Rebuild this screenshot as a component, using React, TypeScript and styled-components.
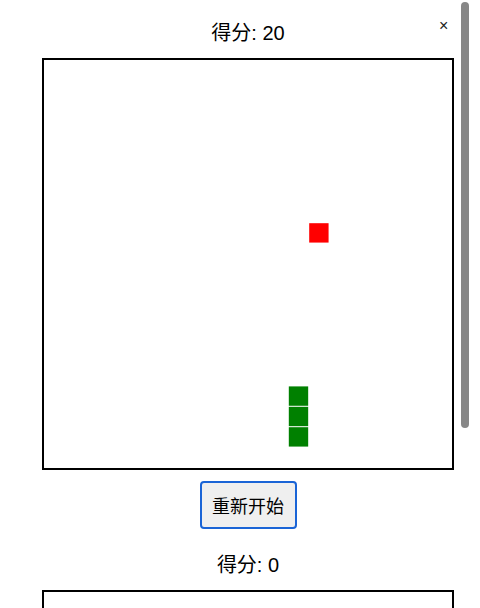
import React from "react";
import styled, { createGlobalStyle } from "styled-components";

const Global = createGlobalStyle`
  html, body { margin: 0; padding: 0; background: #fff; overflow: hidden; }
  body { font-family: "Liberation Sans", "Noto Sans CJK SC", sans-serif; color: #000; }
`;

const Viewport = styled.div`
  width: 480px;
  height: 608px;
  overflow: hidden;
  position: relative;
`;

const ScrollThumb = styled.div`
  position: absolute;
  top: 2px;
  left: 461px;
  width: 8px;
  height: 426px;
  border-radius: 4px;
  background: #878787;
`;

const Column = styled.div`
  width: 412px;
  margin-left: 42px;
  display: flex;
  flex-direction: column;
  align-items: center;
  padding-bottom: 20px;
`;

const Game = styled.section<{ $top: number }>`
  display: flex;
  flex-direction: column;
  align-items: center;
  margin-top: ${(p) => p.$top}px;
`;

const Score = styled.div`
  font-size: 20px;
  line-height: 26px;
  margin-bottom: 12px;
`;

const Board = styled.svg`
  display: block;
  width: 408px;
  height: 408px;
  border: 2px solid #000;
  background: #fff;
`;

const Restart = styled.button`
  margin-top: 11px;
  width: 97px;
  height: 48px;
  font-family: "Liberation Sans", "Noto Sans CJK SC", sans-serif;
  font-size: 18px;
  color: #000;
  background: #efefef;
  border: 2px solid #1a64d6;
  border-radius: 4px;
  padding: 0;
  cursor: pointer;
`;

const Close = styled.button`
  position: absolute;
  top: 17px;
  left: 439px;
  background: none;
  border: none;
  padding: 0;
  font-family: "Liberation Sans", sans-serif;
  font-size: 16px;
  line-height: 18px;
  color: #222;
  cursor: pointer;
`;

type Cell = { x: number; y: number };

function GameView({ score, snake, food, top, showButton }: { score: number; snake: Cell[]; food: Cell | null; top: number; showButton: boolean }) {
  return (
    <Game $top={top}>
      <Score>得分: {score}</Score>
      <Board viewBox="0 0 400 400">
        {food && <rect x={food.x * 20} y={food.y * 20} width={19} height={19} fill="#ff0000" />}
        {snake.map((s, i) => (
          <rect key={i} x={s.x * 20} y={s.y * 20} width={19} height={19} fill="#008000" />
        ))}
      </Board>
      {showButton && <Restart>重新开始</Restart>}
    </Game>
  );
}

export default function App() {
  return (
    <>
      <Global />
      <Viewport>
        <Column>
          <GameView
            top={20}
            score={20}
            food={{ x: 13, y: 8 }}
            snake={[{ x: 12, y: 16 }, { x: 12, y: 17 }, { x: 12, y: 18 }]}
            showButton
          />
          <GameView
            top={23}
            score={0}
            food={{ x: 5, y: 5 }}
            snake={[{ x: 10, y: 10 }]}
            showButton={false}
          />
        </Column>
        <Close aria-label="close">×</Close>
        <ScrollThumb />
      </Viewport>
    </>
  );
}
